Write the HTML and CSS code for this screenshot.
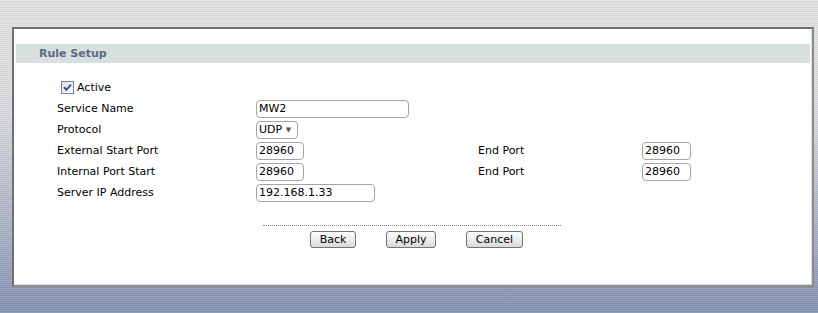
FILE: index.html
```html
<!DOCTYPE html>
<html lang="en">
<head>
  <meta charset="UTF-8" />
  <title>Rule Setup</title>
  <link rel="stylesheet" href="styles.css">
</head>
<body>
  <div class="panel">
    <div class="section-title">Rule Setup</div>

    <div class="form">
      <div class="row">
        <label class="active">
          <span class="check">
            <svg width="13" height="13" viewBox="0 0 13 13">
              <defs>
                <linearGradient id="cb" x1="0" y1="0" x2="1" y2="1">
                  <stop offset="0" stop-color="#dcdcd8" />
                  <stop offset="1" stop-color="#ffffff" />
                </linearGradient>
              </defs>
              <rect x="0.5" y="0.5" width="12" height="12" fill="url(#cb)" stroke="#6f86a6" />
              <path d="M3 6.2 L5.3 8.8 L10 3.6" fill="none" stroke="#2a4fa8" stroke-width="1.9" />
            </svg>
          </span>
          Active
        </label>
      </div>

      <div class="row">
        <span class="lbl">Service Name</span>
        <input type="text" class="field w-name" value="MW2" />
      </div>

      <div class="row">
        <span class="lbl">Protocol</span>
        <div class="select">UDP <span class="arrow">&#9660;</span></div>
      </div>

      <div class="row">
        <span class="lbl">External Start Port</span>
        <input type="text" class="field w-port" value="28960" />
        <span class="lbl">End Port</span>
        <input type="text" class="field w-port2" value="28960" />
      </div>

      <div class="row">
        <span class="lbl">Internal Port Start</span>
        <input type="text" class="field w-port" value="28960" />
        <span class="lbl">End Port</span>
        <input type="text" class="field w-port2" value="28960" />
      </div>

      <div class="row">
        <span class="lbl">Server IP Address</span>
        <input type="text" class="field w-ip" value="192.168.1.33" />
      </div>
    </div>

    <div class="divider"></div>

    <div class="buttons">
      <button class="btn btn-back">Back</button>
      <button class="btn btn-apply">Apply</button>
      <button class="btn btn-cancel">Cancel</button>
    </div>
  </div>
</body>
</html>
```

FILE: styles.css
```css
html {
  height: 100%;
}
body {
  margin: 0;
  padding: 27px 0 0 12px;
  min-height: 100%;
  box-sizing: border-box;
  font-family: 'DejaVu Sans', Verdana, sans-serif;
  font-size: 11px;
  color: #000;
  background:
    repeating-linear-gradient(to bottom, rgba(255,255,255,0.14) 0, rgba(255,255,255,0.14) 1px, rgba(0,0,0,0.03) 1px, rgba(0,0,0,0.03) 2px),
    linear-gradient(to bottom, #e1e1e1 0, #d8d9dc 35%, #a8b0c4 72%, #7f8eae 100%);
}
.panel {
  width: 798px;
  height: 256px;
  background: #fff;
  border: 2px solid;
  border-color: #707070 #8c8c8c #8c8c8c #707070;
  box-shadow: inset -1px -1px 0 #dedede;
}
.section-title {
  margin: 15px 2px 0 2px;
  height: 19px;
  line-height: 20px;
  padding-left: 23px;
  background: #d7dfdf;
  color: #5b6a88;
  font-weight: bold;
}
.form {
  padding: 14px 0 0 43px;
}
.row {
  display: grid;
  grid-template-columns: 199px 222px 164px 60px;
  height: 21px;
  align-items: center;
}
.active {
  display: flex;
  align-items: center;
  gap: 3px;
  padding-left: 4px;
  grid-column: 1 / 3;
}
.check {
  display: flex;
  width: 13px;
  height: 13px;
}
.field {
  box-sizing: border-box;
  height: 18px;
  margin: 0;
  padding: 0 2px;
  border: 1px solid #a4a4a4;
  border-radius: 4px;
  font-family: 'DejaVu Sans', Verdana, sans-serif;
  font-size: 11px;
  color: #000;
  background: #fff;
}
.w-name { width: 153px; }
.w-port { width: 48px; }
.w-port2 { width: 49px; }
.w-ip { width: 119px; }
.select {
  box-sizing: border-box;
  width: 42px;
  height: 18px;
  line-height: 16px;
  padding-left: 2px;
  border: 1px solid #a4a4a4;
  border-radius: 4px;
  white-space: nowrap;
}
.arrow {
  font-size: 7px;
  color: #555;
  vertical-align: 1px;
}
.divider {
  width: 298px;
  margin: 22px 0 0 249px;
  border-top: 1px dotted #8f8f8f;
}
.buttons {
  display: flex;
  gap: 30px;
  margin: 5px 0 0 296px;
}
.btn {
  box-sizing: border-box;
  height: 17px;
  padding: 0;
  border: 1px solid #737373;
  border-radius: 3px;
  background: linear-gradient(to bottom, #fdfdfd, #ececec 50%, #d9d9d9);
  font-family: 'DejaVu Sans', Verdana, sans-serif;
  font-size: 11px;
  line-height: 15px;
  color: #000;
}
.btn-back { width: 46px; }
.btn-apply { width: 50px; }
.btn-cancel { width: 57px; }
```
